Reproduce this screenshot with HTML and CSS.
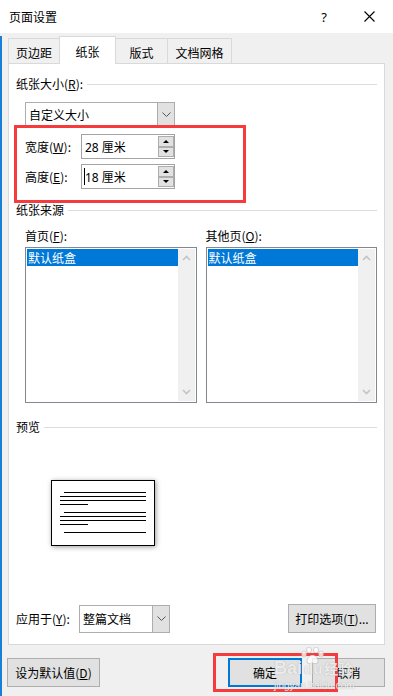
FILE: index.html
```html
<!DOCTYPE html>
<html>
<head>
<meta charset="utf-8">
<link rel="stylesheet" href="styles.css">
</head>
<body>
<div class="window">
  <div class="titlebar">
    <span class="title">页面设置</span>
    <span class="help">?</span>
    <svg class="close" width="11" height="11" viewBox="0 0 11 11"><path d="M0.5 0.5 L10.5 10.5 M10.5 0.5 L0.5 10.5" stroke="#000" stroke-width="1.1" fill="none"/></svg>
  </div>
  <div class="main">
    <div class="tabs">
      <div class="tab t1">页边距</div>
      <div class="tab sel">纸张</div>
      <div class="tab t3">版式</div>
      <div class="tab t4">文档网格</div>
    </div>
    <div class="panel">
      <div class="group-head h1"><span>纸张大小(<u>R</u>):</span></div>
      <div class="combo size-combo">
        <span class="combo-text">自定义大小</span>
        <span class="dd"><svg width="9" height="5" viewBox="0 0 9 5"><path d="M0.5 0.5 L4.5 4.5 L8.5 0.5" stroke="#555" fill="none"/></svg></span>
      </div>
      <div class="spin-row r1">
        <span class="spin-label">宽度(<u>W</u>):</span>
        <div class="spin">
          <span class="spin-text">28 厘米</span>
          <span class="spin-btns"><span class="sb"><i class="up"></i></span><span class="sb"><i class="down"></i></span></span>
        </div>
      </div>
      <div class="spin-row r2">
        <span class="spin-label">高度(<u>E</u>):</span>
        <div class="spin">
          <span class="spin-text"><span class="caret"></span>18 厘米</span>
          <span class="spin-btns"><span class="sb"><i class="up"></i></span><span class="sb"><i class="down"></i></span></span>
        </div>
      </div>
      <div class="group-head h2"><span>纸张来源</span></div>
      <div class="two-col labels">
        <span class="col-label">首页(<u>F</u>):</span>
        <span class="col-label">其他页(<u>O</u>):</span>
      </div>
      <div class="two-col lists">
        <div class="listbox">
          <div class="items"><div class="item">默认纸盒</div></div>
          <div class="scroll">
            <svg width="9" height="6" viewBox="0 0 9 6"><path d="M1 5 L4.5 1.5 L8 5" stroke="#c4c4c4" stroke-width="1.6" fill="none"/></svg>
            <svg width="9" height="6" viewBox="0 0 9 6"><path d="M1 1 L4.5 4.5 L8 1" stroke="#c4c4c4" stroke-width="1.6" fill="none"/></svg>
          </div>
        </div>
        <div class="listbox">
          <div class="items"><div class="item">默认纸盒</div></div>
          <div class="scroll">
            <svg width="9" height="6" viewBox="0 0 9 6"><path d="M1 5 L4.5 1.5 L8 5" stroke="#c4c4c4" stroke-width="1.6" fill="none"/></svg>
            <svg width="9" height="6" viewBox="0 0 9 6"><path d="M1 1 L4.5 4.5 L8 1" stroke="#c4c4c4" stroke-width="1.6" fill="none"/></svg>
          </div>
        </div>
      </div>
      <div class="group-head h3"><span>预览</span></div>
      <div class="preview">
        <svg width="102" height="64" viewBox="0 0 102 64">
          <g stroke="#000" stroke-width="1" shape-rendering="crispEdges">
            <line x1="12" y1="11.5" x2="94" y2="11.5"/>
            <line x1="8" y1="15.5" x2="94" y2="15.5"/>
            <line x1="8" y1="19.5" x2="94" y2="19.5"/>
            <line x1="8" y1="23.5" x2="36" y2="23.5"/>
            <line x1="12" y1="31.5" x2="94" y2="31.5"/>
            <line x1="8" y1="35.5" x2="94" y2="35.5"/>
            <line x1="8" y1="39.5" x2="94" y2="39.5"/>
            <line x1="8" y1="43.5" x2="36" y2="43.5"/>
            <line x1="12" y1="51.5" x2="94" y2="51.5"/>
          </g>
        </svg>
      </div>
      <div class="apply-row">
        <span class="apply-label">应用于(<u>Y</u>):</span>
        <div class="combo apply-combo">
          <span class="combo-text">整篇文档</span>
          <span class="dd"><svg width="9" height="5" viewBox="0 0 9 5"><path d="M0.5 0.5 L4.5 4.5 L8.5 0.5" stroke="#555" fill="none"/></svg></span>
        </div>
        <button class="btn print-btn">打印选项(<u>T</u>)...</button>
      </div>
    </div>
    <div class="buttons">
      <button class="btn default-btn">设为默认值(<u>D</u>)</button>
      <button class="btn ok-btn">确定</button>
      <button class="btn cancel-btn">取消</button>
    </div>
  </div>
  <div class="mark mark-size"></div>
  <div class="mark mark-ok"></div>
  <div class="watermark">
    <svg class="paw" width="26" height="18" viewBox="0 0 26 18">
      <g fill="rgba(255,255,255,0.75)" stroke="rgba(160,160,160,0.55)" stroke-width="0.8">
        <ellipse cx="4" cy="7" rx="2.5" ry="3"/>
        <ellipse cx="9" cy="3" rx="2.5" ry="3"/>
        <ellipse cx="16" cy="3" rx="2.5" ry="3"/>
        <ellipse cx="21" cy="7" rx="2.5" ry="3"/>
        <path d="M7 15 C7 10 10 8 12.5 8 C15 8 18 10 18 15 C18 17 15 17 12.5 16 C10 17 7 17 7 15 Z"/>
      </g>
    </svg>
    <div class="wm-main"><span class="wm-bai">Bai</span><span class="wm-du">du</span><span class="wm-jy">经验</span></div>
    <div class="wm-url">jingyan.baidu.com</div>
  </div>
</div>
</body>
</html>
```

FILE: styles.css
```css
* { box-sizing: border-box; }
html, body { margin: 0; padding: 0; }
body {
  width: 393px;
  height: 696px;
  overflow: hidden;
  background: #f0f0f0;
  font-family: "Noto Sans CJK SC", "Noto Sans", sans-serif;
  font-size: 12px;
  color: #000;
}
u { text-decoration: underline; text-underline-offset: 1px; }
.window { position: relative; width: 393px; height: 696px; }

.titlebar {
  height: 33px;
  background: #fff;
  display: flex;
  align-items: center;
  padding-left: 9px;
  padding-right: 18px;
}
.title { font-size: 12px; line-height: 16px; }
.help {
  margin-left: auto;
  width: 12px;
  text-align: center;
  font-family: "Noto Sans", sans-serif;
  font-size: 13px;
  line-height: 16px;
}
.close { margin-left: 34px; display: block; }

.main {
  height: 663px;
  background: #f0f0f0;
  border-left: 2px solid #1a7fd6;
  padding: 0 8px 0 6px;
}

.tabs {
  margin-top: 3px;
  height: 28px;
  display: flex;
  align-items: flex-end;
}
.tab {
  height: 26px;
  background: #f0f0f0;
  border-top: 1px solid #d9d9d9;
  border-right: 1px solid #d9d9d9;
  text-align: center;
  line-height: 26px;
  padding-top: 2px;
  line-height: 24px;
}
.t1 { width: 51px; border-left: 1px solid #d9d9d9; border-right: none; }
.sel {
  width: 57px;
  height: 28px;
  background: #fff;
  border: 1px solid #d9d9d9;
  border-bottom: none;
  position: relative;
  z-index: 2;
  padding-top: 3px;
  line-height: 24px;
}
.t3 { width: 52px; }
.t4 { width: 64px; }

.panel {
  margin-top: -1px;
  width: 377px;
  height: 582px;
  background: #fff;
  border: 1px solid #d9d9d9;
  padding: 0 7px;
  position: relative;
  z-index: 1;
}

.group-head {
  display: flex;
  align-items: center;
  height: 16px;
  line-height: 16px;
  gap: 4px;
}
.group-head::after {
  content: "";
  flex: 1;
  height: 1px;
  background: #dcdcdc;
}
.h1 { margin-top: 12px; }
.h2 { margin-top: 13px; }
.h3 { margin-top: 16px; }

.combo {
  display: flex;
  background: #fff;
  border: 1px solid #adadad;
}
.combo-text { flex: 1; padding-left: 3px; display: flex; align-items: center; }
.dd {
  width: 17px;
  background: #e1e1e1;
  border-left: 1px solid #adadad;
  display: flex;
  align-items: center;
  justify-content: center;
}
.size-combo { margin: 10px 0 0 9px; width: 150px; height: 25px; }

.spin-row { display: flex; align-items: center; margin-left: 9px; height: 25px; }
.r1 { margin-top: 7px; }
.r2 { margin-top: 5px; }
.spin-label { width: 56px; }
.spin {
  width: 94px;
  height: 25px;
  border: 1px solid #a3a3a3;
  display: flex;
  background: #fff;
}
.spin-text {
  flex: 1;
  display: flex;
  align-items: center;
  padding-left: 3px;
  font-family: "Noto Sans", "Noto Sans CJK SC", sans-serif;
}
.caret { width: 1px; height: 17px; background: #000; margin-right: 0; margin-left: -1px; }
.spin-btns {
  width: 16px;
  display: flex;
  flex-direction: column;
  padding: 1px 0;
}
.sb {
  flex: 1;
  background: #e1e1e1;
  border: 1px solid #adadad;
  display: flex;
  align-items: center;
  justify-content: center;
}
.sb + .sb { margin-top: 0; }
.up, .down { width: 0; height: 0; border-left: 3px solid transparent; border-right: 3px solid transparent; }
.up { border-bottom: 3px solid #000; }
.down { border-top: 3px solid #000; }

.two-col { display: flex; gap: 9px; margin-left: 9px; }
.labels { margin-top: 10px; height: 16px; line-height: 16px; }
.col-label { width: 172px; }
.lists { margin-top: 3px; height: 156px; }
.listbox {
  width: 172px;
  height: 156px;
  border: 1px solid #828790;
  padding: 1px;
  display: flex;
  background: #fff;
}
.items { flex: 1; }
.item {
  height: 17px;
  line-height: 17px;
  background: #0078d7;
  color: #fff;
  padding-left: 1px;
}
.scroll {
  width: 17px;
  background: #f0f0f0;
  display: flex;
  flex-direction: column;
  align-items: center;
  justify-content: space-between;
  padding: 6px 0 6px;
}

.preview {
  margin: 45px 0 0 35px;
  width: 104px;
  height: 66px;
  border: 1px solid #000;
  background: #fff;
  box-shadow: 1px 1px 5px rgba(0,0,0,0.4);
}
.preview svg { display: block; }

.apply-row {
  margin-top: 58px;
  height: 29px;
  display: flex;
  align-items: center;
  margin-right: 1px;
}
.apply-label { width: 63px; }
.apply-combo { width: 91px; height: 28px; }

.btn {
  font-family: "Noto Sans CJK SC", "Noto Sans", sans-serif;
  font-size: 12px;
  color: #000;
  background: #e1e1e1;
  border: 1px solid #adadad;
  height: 29px;
  padding: 0;
  margin: 0;
}
.print-btn { margin-left: auto; width: 88px; }

.buttons {
  margin-top: 13px;
  margin-left: -1px;
  display: flex;
  height: 29px;
}
.default-btn { width: 93px; }
.ok-btn { margin-left: auto; width: 74px; border: 2px solid #0078d7; }
.cancel-btn { margin-left: 10px; width: 73px; }

.mark {
  position: absolute;
  border: 3px solid #f53b3b;
  z-index: 5;
}
.mark-size { left: 14px; top: 125px; width: 232px; height: 78px; }
.mark-ok { left: 213px; top: 653px; width: 125px; height: 39px; }

.watermark {
  position: absolute;
  left: 274px;
  top: 647px;
  width: 95px;
  z-index: 6;
  text-align: center;
  pointer-events: none;
}
.paw { display: block; margin: 0 auto 0 26px; }
.wm-main {
  margin-top: -6px;
  display: flex;
  align-items: baseline;
  color: rgba(255,255,255,0.8);
  text-shadow: 0 0 1px rgba(130,130,130,0.7);
  font-family: "Liberation Sans", sans-serif;
  font-weight: bold;
  line-height: 18px;
}
.wm-bai { font-size: 18px; }
.wm-du { font-size: 15px; margin-left: 2px; }
.wm-jy { font-size: 14px; margin-left: 2px; font-family: "Noto Sans CJK SC", sans-serif; }
.wm-url {
  text-align: left;
  font-family: "Liberation Sans", sans-serif;
  font-size: 10px;
  line-height: 12px;
  color: rgba(255,255,255,0.85);
  text-shadow: 0 0 1px rgba(130,130,130,0.7);
  margin-top: 2px;
}
```
